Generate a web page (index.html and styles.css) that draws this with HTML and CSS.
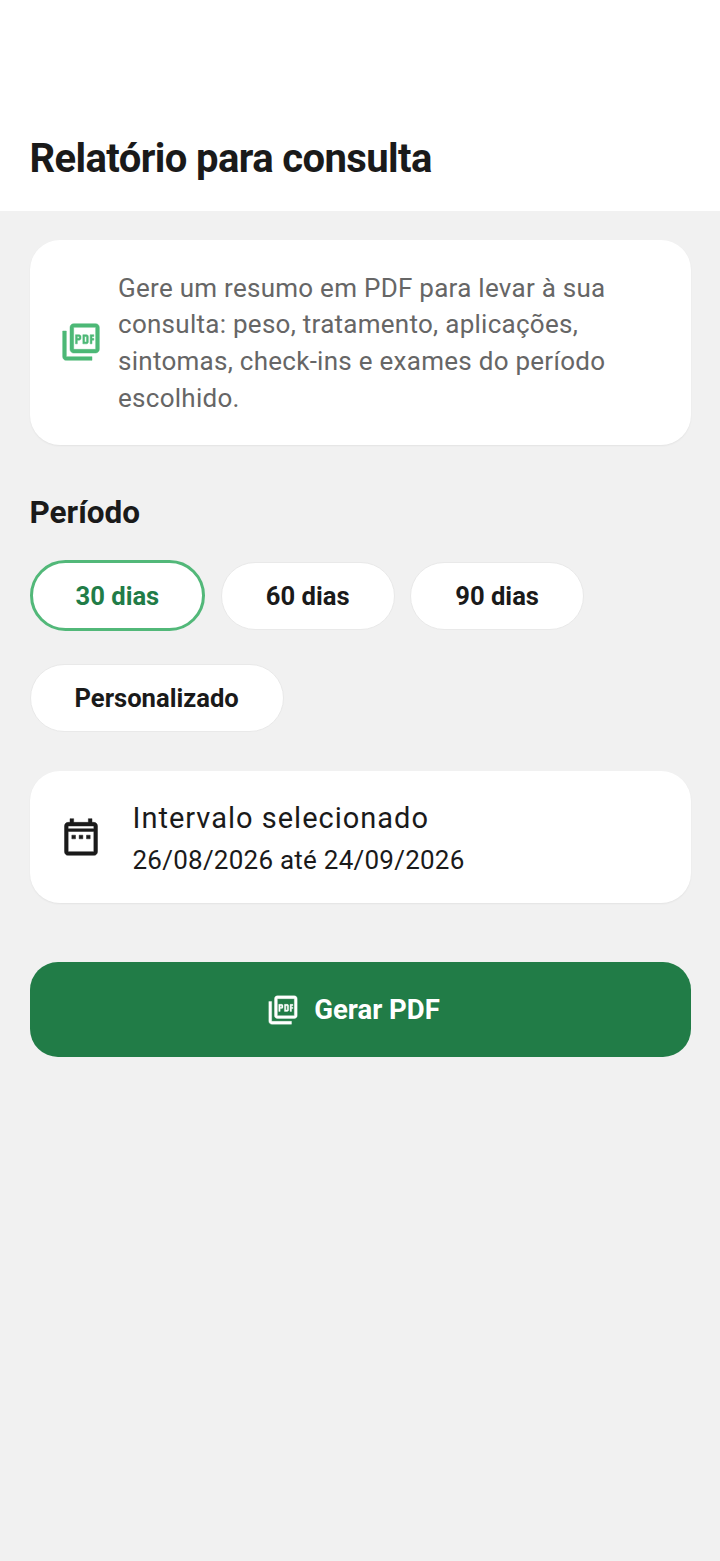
FILE: index.html
```html
<!DOCTYPE html>
<html lang="pt">
<head>
<meta charset="utf-8">
<title>Relatório para consulta</title>
<link rel="stylesheet" href="styles.css">
</head>
<body>
<header class="top">
  <h1 class="title">Relatório para consulta</h1>
</header>
<main class="content">
  <section class="card info">
    <svg class="icon info-icon" viewBox="0 0 24 24"><path d="M20 2H8c-1.1 0-2 .9-2 2v12c0 1.1.9 2 2 2h12c1.1 0 2-.9 2-2V4c0-1.1-.9-2-2-2zm0 14H8V4h12v12zM4 6H2v14c0 1.1.9 2 2 2h14v-2H4V6zm12 6V9c0-.55-.45-1-1-1h-2v5h2c.55 0 1-.45 1-1zm-2-3h1v3h-1V9zm4 2h1v-1h-1V9h1V8h-2v5h1v-2zm-8 0h1c.55 0 1-.45 1-1V9c0-.55-.45-1-1-1H9v5h1v-2zm0-2h1v1h-1V9z"/></svg>
    <p class="info-text">Gere um resumo em PDF para levar à sua consulta: peso, tratamento, aplicações, sintomas, check-ins e exames do período escolhido.</p>
  </section>
  <h2 class="section-title">Período</h2>
  <div class="chips">
    <button class="chip selected">30 dias</button>
    <button class="chip">60 dias</button>
    <button class="chip">90 dias</button>
    <button class="chip">Personalizado</button>
  </div>
  <section class="card range">
    <svg class="icon range-icon" viewBox="0 0 24 24"><path fill-rule="evenodd" d="M19 4h-1V2h-2v2H8V2H6v2H5c-1.1 0-2 .9-2 2v14c0 1.1.9 2 2 2h14c1.1 0 2-.9 2-2V6c0-1.1-.9-2-2-2zm0 16H5V9h14v11zm0-12.5H5V6h14v1.5zM7 11h2v2H7zm4 0h2v2h-2zm4 0h2v2h-2z"/></svg>
    <div class="range-text">
      <div class="range-label">Intervalo selecionado</div>
      <div class="range-value">26/08/2026 até 24/09/2026</div>
    </div>
  </section>
  <button class="cta">
    <svg class="icon cta-icon" viewBox="0 0 24 24"><path d="M20 2H8c-1.1 0-2 .9-2 2v12c0 1.1.9 2 2 2h12c1.1 0 2-.9 2-2V4c0-1.1-.9-2-2-2zm0 14H8V4h12v12zM4 6H2v14c0 1.1.9 2 2 2h14v-2H4V6zm12 6V9c0-.55-.45-1-1-1h-2v5h2c.55 0 1-.45 1-1zm-2-3h1v3h-1V9zm4 2h1v-1h-1V9h1V8h-2v5h1v-2zm-8 0h1c.55 0 1-.45 1-1V9c0-.55-.45-1-1-1H9v5h1v-2zm0-2h1v1h-1V9z"/></svg>
    <span>Gerar PDF</span>
  </button>
</main>
</body>
</html>
```
FILE: styles.css
```css
* { box-sizing: border-box; }
html, body { margin: 0; padding: 0; }
body {
  width: 720px;
  min-height: 1561px;
  background: #f1f1f1;
  font-family: Roboto, sans-serif;
  color: #1a1a1a;
  display: flex;
  flex-direction: column;
}
.top {
  background: #fff;
  height: 211px;
  padding: 133px 29.5px 0;
}
.title {
  margin: 0;
  font-size: 40px;
  line-height: 52px;
  font-weight: 700;
  letter-spacing: -0.6px;
}
.content {
  padding: 29px 29.5px 0;
  display: flex;
  flex-direction: column;
}
.card {
  background: #fff;
  border-radius: 30px;
  display: flex;
  align-items: center;
  box-shadow: 0 1px 2px rgba(0, 0, 0, 0.06);
}
.icon { flex: none; display: block; stroke-width: 0.25; }
.info {
  height: 205px;
  padding: 0 29px;
  gap: 15.5px;
}
.info-icon { width: 44px; height: 44px; fill: #4cb876; stroke: #4cb876; margin-top: -2px; }
.info-text {
  margin: 1px 0 0;
  font-size: 26px;
  line-height: 36.7px;
  color: #666;
  letter-spacing: 0.27px;
}
.section-title {
  margin: 48px 0 0;
  font-size: 31.5px;
  line-height: 40px;
  font-weight: 700;
}
.chips {
  margin-top: 27px;
  display: flex;
  flex-wrap: wrap;
  align-items: center;
  gap: 33px 15.6px;
}
.chip {
  height: 68px;
  padding: 0 44px;
  background: #fff;
  border: 1px solid #e9e9e9;
  border-radius: 34px;
  font-family: Roboto, sans-serif;
  font-size: 25.6px;
  font-weight: 700;
  color: #1a1a1a;
}
.chip.selected {
  height: 71px;
  padding: 0 43px;
  border: 3px solid #52b879;
  border-radius: 36px;
  color: #217c47;
}
.range {
  margin-top: 39px;
  height: 132px;
  padding: 0 29px;
  gap: 30px;
}
.range-icon { width: 44px; height: 44px; fill: #1a1a1a; stroke: #1a1a1a; }
.range-text { padding-top: 2px; }
.range-label {
  font-size: 29px;
  line-height: 38px;
  letter-spacing: 1px;
}
.range-value {
  margin-top: 6px;
  font-size: 26px;
  line-height: 34px;
  letter-spacing: 0.24px;
}
.cta {
  margin-top: 59px;
  height: 95px;
  padding: 0 14px 0 0;
  border: 0;
  border-radius: 28px;
  background: #217c47;
  color: #fff;
  display: flex;
  align-items: center;
  justify-content: center;
  gap: 14px;
  font-family: Roboto, sans-serif;
  font-size: 27.5px;
  font-weight: 700;
}
.cta-icon { width: 34px; height: 34px; fill: #fff; stroke: #fff; }
```
